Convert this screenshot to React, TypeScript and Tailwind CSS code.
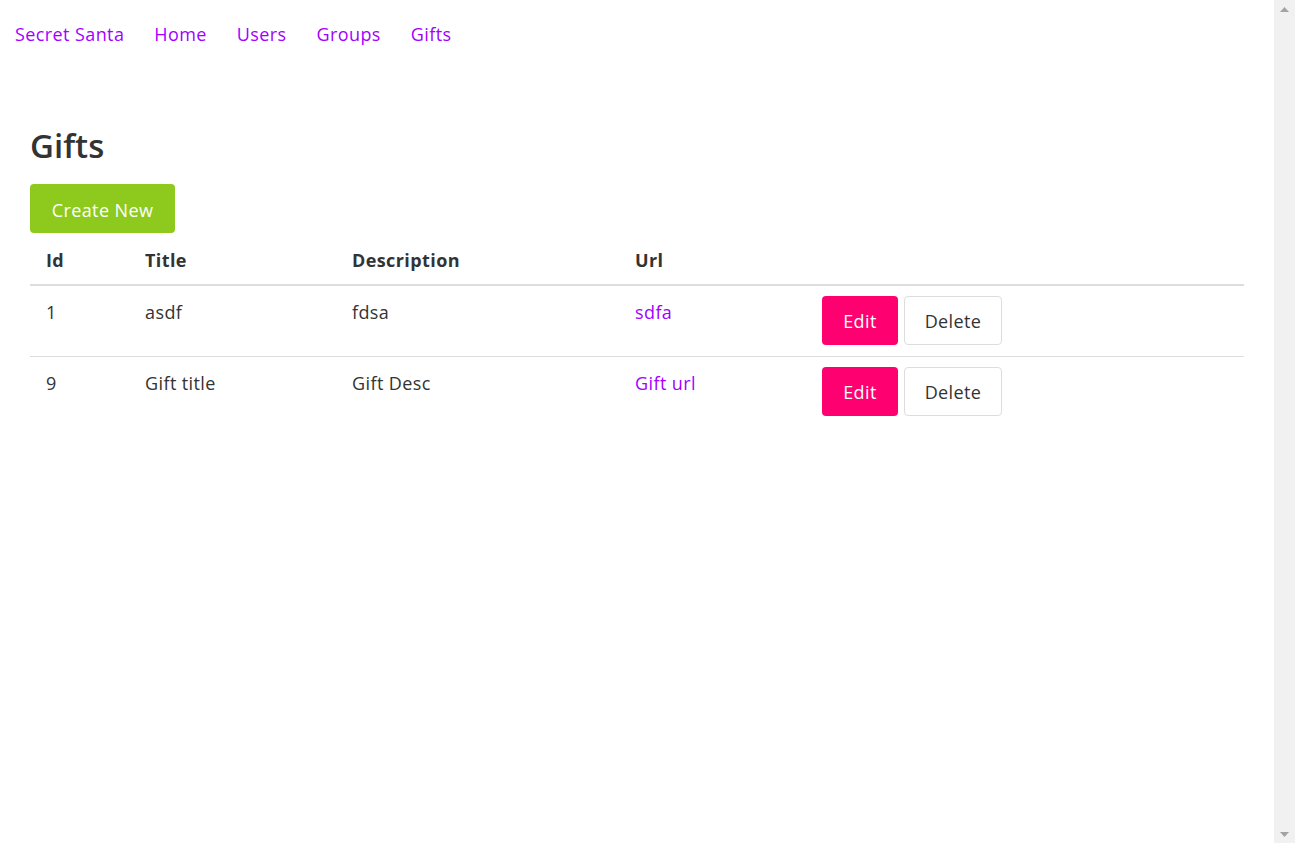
import React from "react";

const rows = [
  { id: 1, title: "asdf", desc: "fdsa", url: "sdfa" },
  { id: 9, title: "Gift title", desc: "Gift Desc", url: "Gift url" },
];

function Arrow({ up }: { up: boolean }) {
  return (
    <svg width="21" height="17" viewBox="0 0 21 17">
      {up ? (
        <polygon points="6,12 10.5,7 15,12" fill="#a3a3a3" />
      ) : (
        <polygon points="6,6 10.5,11 15,6" fill="#a3a3a3" />
      )}
    </svg>
  );
}

export default function App() {
  return (
    <div
      className="flex h-[843px] w-full overflow-hidden bg-white text-[18px] tracking-[0.4px] text-[#333333]"
      style={{ fontFamily: '"Segoe UI", "Open Sans", sans-serif' }}
    >
      <div className="flex-1 min-w-0">
        <nav className="flex items-center pt-[21px] pb-[20px] leading-[27px]">
          {["Secret Santa", "Home", "Users", "Groups", "Gifts"].map((l) => (
            <a key={l} href="#" className="px-[15px] text-[#a200ff]">
              {l}
            </a>
          ))}
        </nav>
        <div className="px-[30px]">
          <h1 className="mt-[58px] mb-[18px] text-[33px] font-semibold leading-[40px] tracking-[0px] text-[#333333]">
            Gifts
          </h1>
          <button className="flex h-[49px] w-[145px] items-center justify-center rounded-[4px] bg-[#8dca1d] pt-[3px] text-[18px] text-white">
            Create New
          </button>
          <table className="w-[1214px] table-fixed border-collapse">
            <colgroup>
              <col className="w-[99px]" />
              <col className="w-[207px]" />
              <col className="w-[283px]" />
              <col className="w-[187px]" />
              <col />
            </colgroup>
            <thead>
              <tr className="border-b-2 border-[#dddddd]">
                <th className="px-[16px] pt-[14px] pb-[10px] text-left font-bold leading-[27px]">Id</th>
                <th className="px-[16px] pt-[14px] pb-[10px] text-left font-bold leading-[27px]">Title</th>
                <th className="px-[16px] pt-[14px] pb-[10px] text-left font-bold leading-[27px]">Description</th>
                <th className="px-[16px] pt-[14px] pb-[10px] text-left font-bold leading-[27px]">Url</th>
                <th className="px-[16px] pt-[14px] pb-[10px]"></th>
              </tr>
            </thead>
            <tbody>
              {rows.map((r) => (
                <tr key={r.id} className="border-b border-[#dddddd] last:border-b-0">
                  <td className="px-[16px] pt-[13px] align-top leading-[27px]">{r.id}</td>
                  <td className="px-[16px] pt-[13px] align-top leading-[27px]">{r.title}</td>
                  <td className="px-[16px] pt-[13px] align-top leading-[27px]">{r.desc}</td>
                  <td className="px-[16px] pt-[13px] align-top leading-[27px]">
                    <a href="#" className="text-[#a200ff]">{r.url}</a>
                  </td>
                  <td className="px-[16px] pt-[10px] pb-[11px] align-top">
                    <div className="flex gap-[6px]">
                      <button className="flex h-[49px] w-[76px] items-center justify-center rounded-[4px] bg-[#ff0070] pt-[2px] text-white">
                        Edit
                      </button>
                      <button className="flex h-[49px] w-[98px] items-center justify-center rounded-[4px] border border-[#dddddd] bg-white pt-[2px] text-[#333333]">
                        Delete
                      </button>
                    </div>
                  </td>
                </tr>
              ))}
            </tbody>
          </table>
        </div>
      </div>
      <div className="flex w-[21px] flex-col justify-between bg-[#f1f1f1]">
        <Arrow up />
        <Arrow up={false} />
      </div>
    </div>
  );
}
